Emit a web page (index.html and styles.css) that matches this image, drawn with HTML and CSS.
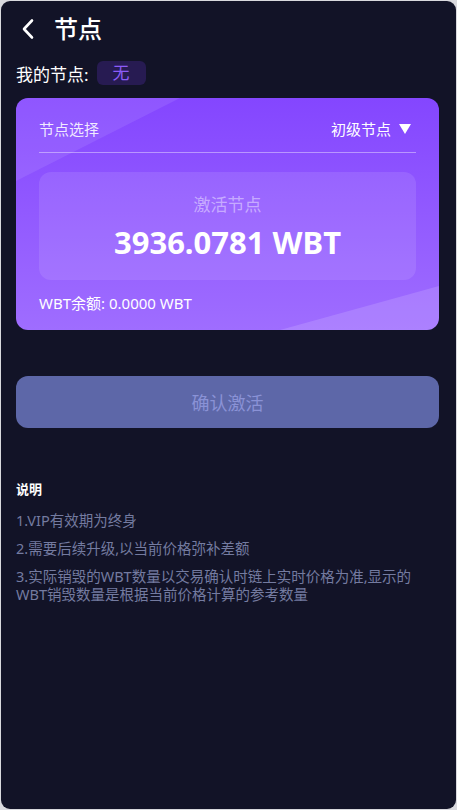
FILE: index.html
```html
<!DOCTYPE html>
<html lang="zh-CN">
  <head>
    <meta charset="UTF-8" />
    <title>节点</title>
    <link rel="stylesheet" href="styles.css">
  </head>

  <body>
    <div class="app">
      <header class="topbar">
        <span class="back">
          <svg width="16" height="22" viewBox="0 0 16 22"><path d="M12 2.5 L4 11 L12 19.5" fill="none" stroke="#fff" stroke-width="2.6" stroke-linecap="round" stroke-linejoin="round"/></svg>
        </span>
        <h1>节点</h1>
      </header>

      <div class="mine">
        <span>我的节点:</span>
        <span class="badge">无</span>
      </div>

      <section class="card">
        <div class="pick">
          <span class="pick-label">节点选择</span>
          <span class="pick-value">初级节点 <i class="arrow"></i></span>
        </div>
        <div class="amount">
          <p class="amount-label">激活节点</p>
          <p class="amount-num">3936.0781 WBT</p>
        </div>
        <p class="balance">WBT余额: 0.0000 WBT</p>
      </section>

      <button class="confirm">确认激活</button>

      <section class="notes">
        <h2>说明</h2>
        <p>1.VIP有效期为终身</p>
        <p>2.需要后续升级,以当前价格弥补差额</p>
        <p>3.实际销毁的WBT数量以交易确认时链上实时价格为准,显示的WBT销毁数量是根据当前价格计算的参考数量</p>
      </section>
    </div>
  </body>
</html>
```

FILE: styles.css
```css
* {
  box-sizing: border-box;
}

body {
  margin: 0;
  background-color: #d9d9de;
  font-family: "Noto Sans", "Noto Sans CJK SC", sans-serif;
}

.app {
  margin: 1px;
  height: 808px;
  border-radius: 9px;
  background-color: #121327;
  color: #fff;
  padding: 0 17px 0 15px;
  overflow: hidden;
}

.topbar {
  height: 56px;
  display: flex;
  align-items: center;
}

.back {
  display: flex;
  width: 38px;
  padding-left: 4px;
}

.topbar h1 {
  margin: 0;
  font-size: 24px;
  font-weight: 500;
  line-height: 30px;
}

.mine {
  margin-top: 4px;
  height: 24px;
  display: flex;
  align-items: center;
  font-size: 17px;
}

.badge {
  margin-left: 8px;
  height: 24px;
  line-height: 24px;
  padding: 0 16px;
  border-radius: 6px;
  background-color: #271b52;
  color: #8c5cf7;
}

.card {
  position: relative;
  margin-top: 13px;
  padding: 20px 23px 17px;
  border-radius: 12px;
  background: linear-gradient(to bottom, #8446ff, #9f6dff);
  overflow: hidden;
}

.card::before,
.card::after {
  content: "";
  position: absolute;
  inset: 0;
  background-color: rgba(255, 255, 255, 0.09);
  pointer-events: none;
}

.card::before {
  clip-path: polygon(0 0, 164px 0, 0 83px);
}

.card::after {
  background-color: rgba(255, 255, 255, 0.14);
  clip-path: polygon(100% calc(100% - 44px), 100% 100%, calc(100% - 159px) 100%);
}

.pick {
  position: relative;
  z-index: 1;
  display: flex;
  justify-content: space-between;
  line-height: 22px;
  font-size: 15px;
  padding-bottom: 12px;
  border-bottom: 1px solid rgba(255, 255, 255, 0.4);
}

.pick-label {
  color: rgba(255, 255, 255, 0.88);
}

.pick-value {
  display: flex;
  align-items: center;
  margin-right: 5px;
}

.arrow {
  margin-left: 8px;
  width: 0;
  height: 0;
  border-left: 6px solid transparent;
  border-right: 6px solid transparent;
  border-top: 10px solid #fff;
}

.amount {
  position: relative;
  z-index: 1;
  margin-top: 19px;
  height: 108px;
  padding-top: 20px;
  border-radius: 12px;
  background-color: rgba(255, 255, 255, 0.1);
  text-align: center;
}

.amount p {
  margin: 0;
}

.amount-label {
  font-size: 17px;
  line-height: 26px;
  color: rgba(255, 255, 255, 0.45);
}

.amount-num {
  margin-top: 4px !important;
  font-size: 31px;
  line-height: 40px;
  font-weight: 700;
}

.balance {
  position: relative;
  z-index: 1;
  margin: 13px 0 0;
  font-size: 15px;
  line-height: 20px;
}

.confirm {
  display: block;
  width: 100%;
  margin-top: 46px;
  height: 52px;
  border: none;
  border-radius: 12px;
  background-color: #5d67a8;
  color: #8a92d6;
  font-family: inherit;
  font-size: 18px;
}

.notes {
  margin-top: 51px;
  padding-right: 14px;
}

.notes h2 {
  margin: 0 0 12px;
  font-size: 13px;
  line-height: 20px;
  font-weight: 700;
}

.notes p {
  margin: 0 0 10px;
  font-size: 14.5px;
  line-height: 18px;
  color: #747ba0;
}
```
